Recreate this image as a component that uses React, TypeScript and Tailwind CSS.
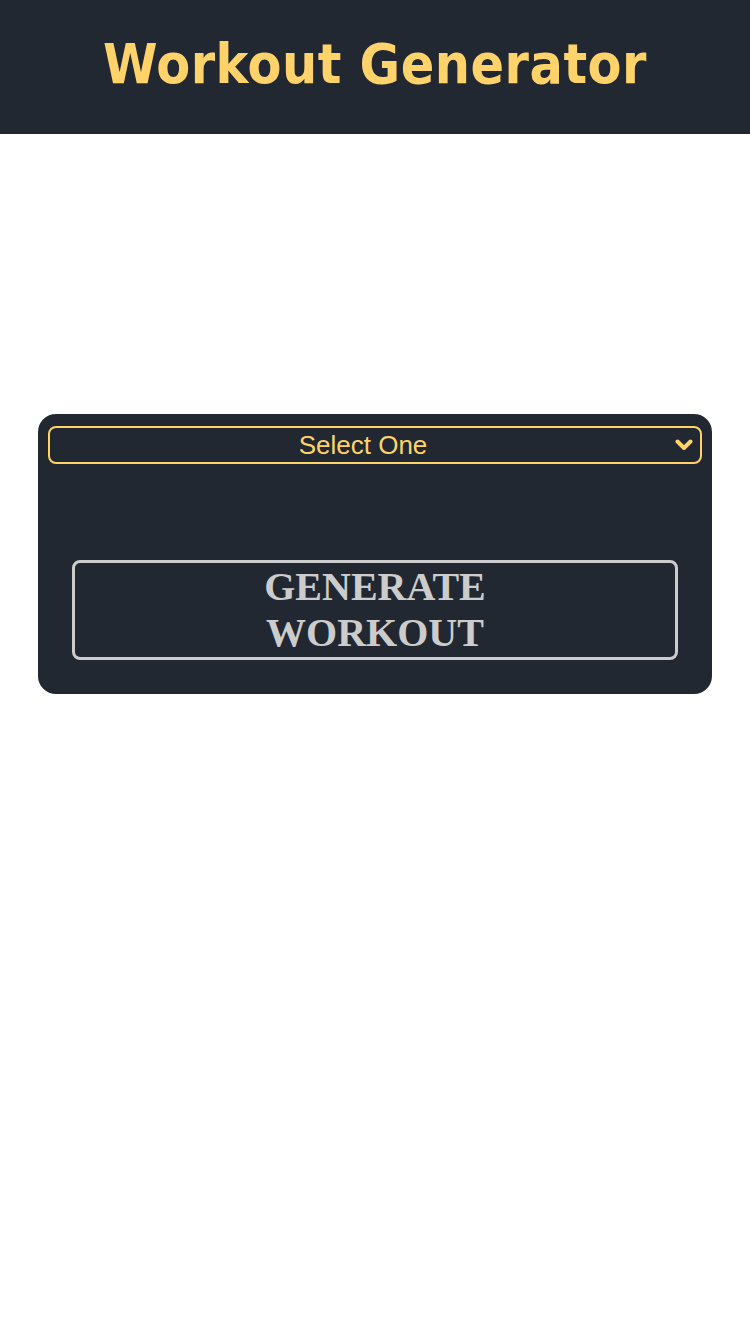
import React from "react";

export default function App() {
  return (
    <div className="min-h-[1334px] w-[750px] bg-white">
      <header className="flex h-[134px] items-center justify-center bg-[#222831] pb-[6px]">
        <h1
          className="text-[55px] font-bold leading-none tracking-[0.5px] text-[#ffd369]"
          style={{ fontFamily: '"DejaVu Sans Condensed", "DejaVu Sans", sans-serif' }}
        >
          Workout Generator
        </h1>
      </header>
      <main className="px-[38px] pt-[280px]">
        <div className="flex h-[280px] flex-col rounded-[18px] bg-[#222831] px-[10px] pt-[12px]">
          <div className="relative h-[38px] rounded-[8px] border-2 border-[#ffd369]">
            <div
              className="flex h-full items-center justify-center pr-[24px] text-[26px] text-[#ffd369]"
              style={{ fontFamily: '"Liberation Sans", Arial, sans-serif' }}
            >
              Select One
            </div>
            <svg
              className="absolute right-[7px] top-1/2 -translate-y-1/2"
              width="18"
              height="12"
              viewBox="0 0 18 12"
            >
              <path d="M2.5 2.5 L9 9 L15.5 2.5" fill="none" stroke="#ffd369" strokeWidth="4" strokeLinecap="round" strokeLinejoin="round" />
            </svg>
          </div>
          <div className="mt-[96px] px-[24px]">
            <button
              className="flex h-[100px] w-full items-center justify-center rounded-[8px] border-[3px] border-[#cccccc] text-[40px] font-bold leading-[46px] text-[#cccccc]"
              style={{ fontFamily: '"Liberation Serif", "Times New Roman", serif' }}
            >
              <span className="block">
                GENERATE
                <br />
                WORKOUT
              </span>
            </button>
          </div>
        </div>
      </main>
    </div>
  );
}
